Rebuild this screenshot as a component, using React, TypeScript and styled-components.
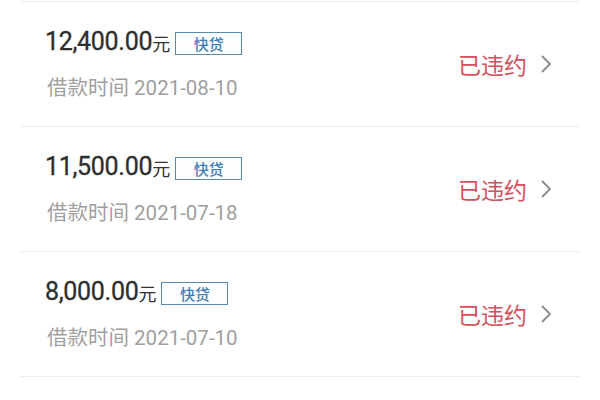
import React from 'react';
import styled, { createGlobalStyle } from 'styled-components';

const GlobalStyle = createGlobalStyle`
  body {
    margin: 0;
    background: #ffffff;
    font-family: Roboto, "Noto Sans CJK SC", sans-serif;
  }
`;

const List = styled.div`
  padding: 1px 20px 0;
`;

const Row = styled.div<{ $first?: boolean }>`
  height: 124px;
  display: flex;
  align-items: center;
  justify-content: space-between;
  padding: 0 28px 0 25px;
  border-top: ${(p) => (p.$first ? '1px solid #ededed' : 'none')};
  border-bottom: 1px solid #ededed;
`;

const Info = styled.div`
  display: flex;
  flex-direction: column;
  gap: 20px;
`;

const AmountLine = styled.div`
  display: flex;
  align-items: center;
  height: 28px;
`;

const Amount = styled.span`
  font-size: 25px;
  color: #2e2e2e;
  letter-spacing: -0.3px;
  -webkit-text-stroke: 0.3px #2e2e2e;
`;

const Unit = styled.span`
  font-size: 18px;
  color: #333333;
  margin-top: 4px;
`;

const Badge = styled.span`
  margin: 5px 0 0 5px;
  width: 67px;
  height: 23px;
  box-sizing: border-box;
  border: 1.5px solid #5b88ab;
  background: #fbfdff;
  color: #3f7db5;
  font-size: 15px;
  font-weight: 500;
  display: flex;
  align-items: center;
  justify-content: center;
`;

const DateLine = styled.div`
  font-size: 20.5px;
  color: #a0a0a0;
  line-height: 26px;
  padding-left: 2px;
`;

const Status = styled.div`
  display: flex;
  align-items: center;
  gap: 13px;
  color: #d4505c;
  font-size: 23px;
`;

const Chevron = () => (
  <svg width="12" height="20" viewBox="0 0 12 20">
    <polyline points="2,2 10,10 2,18" fill="none" stroke="#8a8a8a" strokeWidth="1.8" />
  </svg>
);

const loans = [
  { amount: '12,400.00', date: '2021-08-10' },
  { amount: '11,500.00', date: '2021-07-18' },
  { amount: '8,000.00', date: '2021-07-10' },
];

export default function App() {
  return (
    <>
      <GlobalStyle />
      <List>
        {loans.map((l, i) => (
          <Row key={l.date} $first={i === 0}>
            <Info>
              <AmountLine>
                <Amount>{l.amount}</Amount>
                <Unit>元</Unit>
                <Badge>快贷</Badge>
              </AmountLine>
              <DateLine>借款时间 {l.date}</DateLine>
            </Info>
            <Status>
              已违约
              <Chevron />
            </Status>
          </Row>
        ))}
      </List>
    </>
  );
}
